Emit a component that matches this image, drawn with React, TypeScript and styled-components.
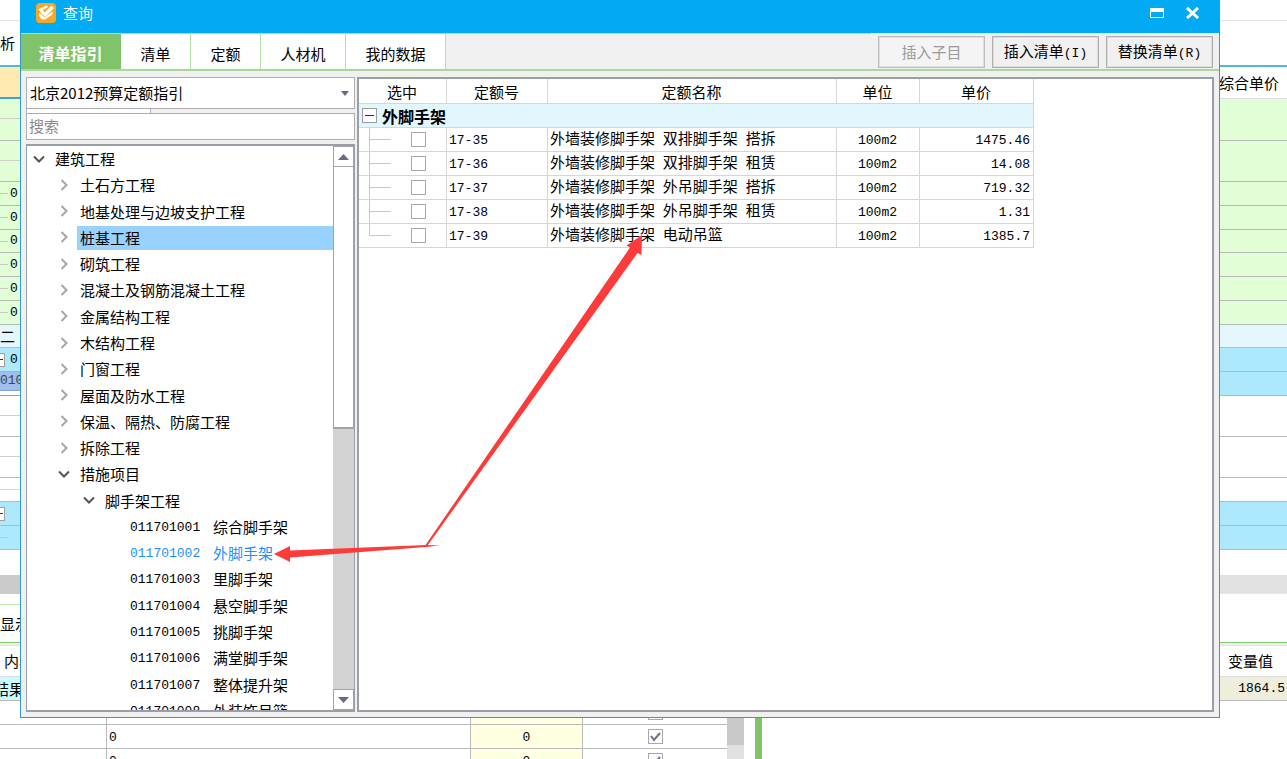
import React from "react";
import styled, { createGlobalStyle, css } from "styled-components";

const sans = '"Noto Sans CJK SC", "Liberation Sans", sans-serif';
const mono = '"Liberation Mono", "Noto Sans CJK SC", monospace';

const GlobalStyle = createGlobalStyle`
  * { box-sizing: border-box; }
  html, body { margin: 0; padding: 0; overflow: hidden; }
  body { font: 15px/24px ${sans}; color: #000; background: #fff; }
  button, input, select { font: inherit; color: inherit; }
`;

/* ---------- text helpers ---------- */

const Ascii = styled.span`
  font-family: ${mono};
  font-size: 13px;
  white-space: pre;
`;

const Mixed = ({ children }: { children: string }) => (
  <>
    {children.split(/([\x20-\x7e]+)/).map((part, i) =>
      i % 2 ? <Ascii key={i}>{part}</Ascii> : part
    )}
  </>
);

/* ---------- estimate sheet behind the dialog ---------- */

const Desktop = styled.main`
  position: relative;
  height: 100vh;
  overflow: hidden;
  background: #fff;
`;

const Sheet = styled.div`
  display: flex;
  justify-content: space-between;
`;

const Strip = styled.div<{ $wide?: boolean }>`
  width: ${(p) => (p.$wide ? "68px" : "36px")};
  overflow: hidden;
`;

type BandProps = { $h: number; $bg?: string; $line?: string; $thick?: boolean; $align?: string; $pad?: number; $dim?: boolean };

const Band = styled.div<BandProps>`
  display: flex;
  align-items: center;
  justify-content: ${(p) => p.$align ?? "flex-start"};
  height: ${(p) => p.$h}px;
  padding: 0 ${(p) => p.$pad ?? 0}px;
  background: ${(p) => p.$bg ?? "#fff"};
  border-bottom: ${(p) => (p.$thick ? 2 : 1)}px solid ${(p) => p.$line ?? "#b9b9b9"};
  color: ${(p) => (p.$dim ? "#444" : "inherit")};
  white-space: nowrap;
`;

const Twig = styled.span`
  width: 8px;
  margin-right: 2px;
  flex: none;
  border-top: 1px solid #c8c8c8;
`;

const MiniBox = styled.span`
  position: relative;
  flex: none;
  width: 5px;
  height: 14px;
  margin-right: 5px;
  border: 1px solid #a0a0a0;
  border-left: 0;
  background: #fff;
  &::before {
    content: "";
    position: absolute;
    left: 0;
    top: 5px;
    width: 3px;
    border-top: 1px solid #333;
  }
`;

type BandData = {
  h: number; bg?: string; line?: string; thick?: boolean;
  text?: string; align?: string; pad?: number; twig?: boolean; box?: boolean; dim?: boolean;
};

const green = "#e2fed6";
const cyan = "#aee8fc";
const blueLine = "#4db8e4";

const leftBands: BandData[] = [
  { h: 21, line: "#e2e2e2" },
  { h: 46, line: blueLine, thick: true, text: "析" },
  { h: 32, bg: "#ffebb2", line: "#3aa6d4", thick: true },
  { h: 20, bg: green, line: "#cfcfcf" },
  { h: 22, bg: green },
  { h: 20, bg: green, line: "#cfcfcf" },
  { h: 21, bg: green },
  ...[24, 24, 23, 24, 24, 24].map((h) => ({ h, bg: green, text: "0", twig: true })),
  { h: 23, bg: "#e4f7fd", text: "二" },
  { h: 24, bg: cyan, line: "#8fb7e0", text: "0", box: true },
  { h: 19, bg: "#a0bdec", line: "#7fa6dc", text: "010", dim: true },
  { h: 5, line: blueLine },
  { h: 20, line: "#cfcfcf" },
  { h: 21 },
  { h: 20, line: "#cfcfcf" },
  { h: 21 },
  { h: 12, line: "#d6d6d6" },
  { h: 12 },
  { h: 24, bg: cyan, box: true },
  { h: 24, bg: cyan, twig: true },
  { h: 25, line: "#fff" },
  { h: 19, bg: "#cbcbcb", line: "#cbcbcb" },
  { h: 11, line: "#b9ecab" },
  { h: 38, line: "#7ecb6c", text: "显示" },
  { h: 3, bg: "#eee", line: "#e2e2e2" },
  { h: 31, line: "#ddd", text: "内容", pad: 4 },
  { h: 24, bg: "#c9fbff", text: "结果", align: "flex-end", pad: 12 },
];

const rightBands: BandData[] = [
  { h: 21, line: "#e2e2e2" },
  { h: 46, line: blueLine, thick: true },
  { h: 32, line: "#ddd", text: "综合单价" },
  { h: 42, bg: green },
  { h: 41, bg: green },
  ...[24, 24, 23, 24, 24, 24].map((h) => ({ h, bg: green })),
  { h: 23, bg: "#e4f7fd" },
  { h: 24, bg: cyan },
  { h: 24, bg: cyan },
  { h: 41 },
  { h: 41 },
  { h: 24 },
  { h: 24, bg: cyan },
  { h: 24, bg: cyan },
  { h: 25, line: "#fff" },
  { h: 19, bg: "#e1e1e1", line: "#e8e8e8" },
  { h: 49, line: "#7ecb6c" },
  { h: 3, bg: "#eee", line: "#e2e2e2" },
  { h: 31, line: "#ddd", text: "变量值", pad: 9 },
  { h: 24, bg: "#efeddc", text: "1864.5", align: "flex-end", pad: 2 },
];

const Bands = ({ rows }: { rows: BandData[] }) => (
  <>
    {rows.map((r, i) => (
      <Band key={i} $h={r.h} $bg={r.bg} $line={r.line} $thick={r.thick} $align={r.align} $pad={r.pad} $dim={r.dim}>
        {r.twig && <Twig />}
        {r.box && <MiniBox />}
        {r.text && <Mixed>{r.text}</Mixed>}
      </Band>
    ))}
  </>
);

const Footer = styled.div`
  display: flex;
  height: 60px;
  overflow: hidden;
`;

const VarTable = styled.table`
  width: 727px;
  table-layout: fixed;
  border-collapse: separate;
  border-spacing: 0;
  td {
    height: 24px;
    padding: 0 2px;
    line-height: 20px;
    border-bottom: 1px solid #b9b9b9;
    border-right: 1px solid #b9b9b9;
  }
  td:nth-child(3) { background: #ffffe2; text-align: center; }
  td:nth-child(4) { border-right: 0; text-align: center; }
`;

const Track = styled.div`
  width: 17px;
  background: #e1e1e1;
`;

const Thumb = styled.div`
  height: 44px;
  background: #c9c9c9;
`;

const Splitter = styled.div`
  width: 7px;
  margin-left: 11px;
  background: #80c56b;
`;

const tick =
  "url(\"data:image/svg+xml,%3Csvg xmlns='http://www.w3.org/2000/svg' viewBox='0 0 13 13'%3E%3Cpath d='M2 6l3 4 6-7' fill='none' stroke='%236f6f88' stroke-width='2'/%3E%3C/svg%3E\")";

const Check = styled.input`
  appearance: none;
  display: block;
  flex: none;
  width: 15px;
  height: 15px;
  margin: 0 auto;
  border: 1px solid #a8a8a8;
  background: #fff;
  &:checked { background: #fff ${tick} center / 13px 13px no-repeat; }
`;

/* ---------- dialog frame ---------- */

const Dialog = styled.section`
  position: absolute;
  inset: 0 67px 41px 20px;
  display: flex;
  flex-direction: column;
  border: 1px solid #2f9dcb;
  border-top: 0;
  background: #f0f0f0;
`;

const TitleBar = styled.header`
  display: flex;
  align-items: center;
  flex: none;
  height: 33px;
  margin: 0 -1px;
  padding: 0 20px 7px 16px;
  background: #02a9f3;
  color: #fff;
`;

const Title = styled.h1`
  flex: 1;
  margin: 0 0 0 7px;
  font-size: 15px;
  font-weight: 400;
  line-height: 24px;
`;

const WindowButton = styled.button`
  display: flex;
  padding: 0;
  border: 0;
  background: none;
  & + & { margin-left: 21px; }
`;

const Toolbar = styled.div`
  display: flex;
  align-items: center;
  flex: none;
  height: 38px;
  padding-right: 6px;
  border-bottom: 2px solid #a9d99a;
`;

const Tabs = styled.nav`
  display: flex;
  flex: 1;
  align-self: stretch;
  border-top: 1px solid #b4e2a2;
`;

const Tab = styled.button<{ $w: number; $active?: boolean }>`
  width: ${(p) => p.$w}px;
  padding: 4px 0 0;
  border: 0;
  border-right: 1px solid #b4e2a2;
  background: #fff;
  ${(p) =>
    p.$active &&
    css`
      padding-top: 2px;
      background: #80c36b;
      border-color: #80c36b;
      color: #fff;
      font-size: 16px;
      font-weight: 700;
    `}
`;

const Action = styled.button`
  width: 107px;
  height: 32px;
  margin: 2px 0 0 7px;
  padding: 0;
  border: 1px solid #adadad;
  outline: 1px solid #dedede;
  outline-offset: -2px;
  background: #f0f0f0;
  line-height: 24px;
  &:disabled { color: #9b9b9b; background: #f4f4f4; border-color: #bdbdbd; }
`;

const Body = styled.div`
  display: flex;
  flex: 1;
  gap: 2px;
  min-height: 0;
  padding: 6px 5px 5px;
`;

/* ---------- guide tree ---------- */

const Side = styled.aside`
  display: flex;
  flex-direction: column;
  flex: none;
  width: 329px;
`;

const SelectWrap = styled.div`
  position: relative;
  svg { position: absolute; right: 6px; top: 14px; pointer-events: none; }
`;

const GuideSelect = styled.select`
  appearance: none;
  display: block;
  width: 100%;
  height: 32px;
  padding: 0 3px;
  border: 1px solid #adadad;
  border-radius: 0;
  background: #fff;
`;

const Sliver = styled.div`
  width: 125px;
  height: 4px;
  border: solid #b4b4b4;
  border-width: 0 1px;
  background: #fff;
`;

const Search = styled.input`
  height: 27px;
  padding: 0 2px 2px;
  border: 1px solid #adadad;
  border-radius: 0;
  background: #fff;
  &::placeholder { color: #8a8a8a; opacity: 1; }
`;

const TreeBox = styled.div`
  display: flex;
  flex: 1;
  min-height: 0;
  margin-top: 4px;
  border: 2px solid #9a9ea6;
  border-width: 2px 1px;
  background: #fff;
`;

const TreeView = styled.div`
  flex: 1;
  overflow: hidden;
`;

const TreeList = styled.ul`
  display: grid;
  grid-auto-rows: 1fr;
  height: 578px;
  margin: 0;
  padding: 0;
  list-style: none;
`;

const TreeItem = styled.li<{ $depth: number }>`
  display: flex;
  align-items: center;
  padding-left: ${(p) => p.$depth * 25}px;
  svg { flex: none; margin: 0 7px 1px 6px; }
`;

const TreeLabel = styled.span<{ $selected?: boolean; $current?: boolean; $leaf?: boolean }>`
  display: flex;
  flex: 1;
  height: 24px;
  margin-left: ${(p) => (p.$leaf ? 25 : 0)}px;
  padding-left: 3px;
  background: ${(p) => (p.$selected ? "#99d1ff" : "none")};
  color: ${(p) => (p.$current ? "#1e90ff" : "inherit")};
  white-space: nowrap;
`;

const Code = styled(Ascii)`
  width: 83px;
  line-height: 26px;
`;

const ScrollBar = styled.div`
  display: flex;
  flex-direction: column;
  flex: none;
  width: 21px;
  background: #d3d3d3;
`;

const ScrollButton = styled.button`
  display: flex;
  align-items: center;
  justify-content: center;
  height: 21px;
  padding: 0;
  border: 1px solid #a4a4a4;
  background: #fff;
`;

const ScrollThumb = styled.div`
  height: 262px;
  margin-bottom: auto;
  border: 1px solid #a4a4a4;
  border-top: 0;
  border-bottom-width: 2px;
  background: #fff;
`;

type Node = { depth: number; label: string; open?: boolean; code?: string; selected?: boolean; current?: boolean };

const chapters = [
  "土石方工程", "地基处理与边坡支护工程", "桩基工程", "砌筑工程", "混凝土及钢筋混凝土工程",
  "金属结构工程", "木结构工程", "门窗工程", "屋面及防水工程", "保温、隔热、防腐工程", "拆除工程",
];

const scaffolds = [
  "综合脚手架", "外脚手架", "里脚手架", "悬空脚手架", "挑脚手架", "满堂脚手架", "整体提升架", "外装饰吊篮",
];

const nodes: Node[] = [
  { depth: 0, label: "建筑工程", open: true },
  ...chapters.map((label) => ({ depth: 1, label, selected: label === "桩基工程" })),
  { depth: 1, label: "措施项目", open: true },
  { depth: 2, label: "脚手架工程", open: true },
  ...scaffolds.map((label, i) => ({
    depth: 3,
    label,
    code: `01170100${i + 1}`,
    current: label === "外脚手架",
  })),
];

const Chevron = ({ open }: { open?: boolean }) => (
  <svg width="12" height="12" viewBox="0 0 12 12" fill="none" strokeWidth="2">
    {open ? <path d="M1 3.5l5 5 5-5" stroke="#555" /> : <path d="M3.5 1l5 5-5 5" stroke="#a6a6a6" />}
  </svg>
);

const Triangle = ({ up }: { up?: boolean }) => (
  <svg width="11" height="6" viewBox="0 0 11 6">
    <path d={up ? "M0 6L5.5 0 11 6z" : "M0 0h11L5.5 6z"} fill="#6a6a80" />
  </svg>
);

/* ---------- quota table ---------- */

const Pane = styled.div`
  flex: 1;
  min-width: 0;
  border: 2px solid #9a9ea6;
  background: #fff;
`;

const Quotas = styled.table`
  width: 675px;
  table-layout: fixed;
  border-collapse: separate;
  border-spacing: 0;
  th, td {
    height: 24px;
    padding: 0 3px 0 2px;
    line-height: 20px;
    border: solid #d6d6d6;
    border-width: 0 1px 1px 0;
    text-align: left;
    white-space: nowrap;
  }
  thead th { height: 25px; padding-top: 2px; font-weight: 400; text-align: center; }
  tbody td:first-child { padding: 0; }
  td:nth-child(4) { text-align: center; }
  td:nth-child(5) { text-align: right; }
`;

const GroupCell = styled.th`
  && { padding: 0; background: #e2f6fe; }
`;

const GroupInner = styled.div`
  display: flex;
  align-items: center;
  gap: 5px;
  height: 23px;
  padding-left: 3px;
  font-size: 16px;
  font-weight: 700;
`;

const Expander = styled.button`
  display: flex;
  width: 15px;
  height: 15px;
  padding: 0;
  border: 1px solid #9c9c9c;
  background: #fff;
`;

const Pick = styled.div`
  display: flex;
  align-items: center;
  height: 23px;
  svg { flex: none; margin-right: 19px; }
  ${Check} { margin: 0; }
`;

const quotas = [
  ["17-35", "外墙装修脚手架 双排脚手架 搭拆", "1475.46"],
  ["17-36", "外墙装修脚手架 双排脚手架 租赁", "14.08"],
  ["17-37", "外墙装修脚手架 外吊脚手架 搭拆", "719.32"],
  ["17-38", "外墙装修脚手架 外吊脚手架 租赁", "1.31"],
  ["17-39", "外墙装修脚手架 电动吊篮", "1385.7"],
];

const Arrows = styled.svg`
  position: absolute;
  left: 0;
  top: 0;
  pointer-events: none;
`;

export default function App() {
  return (
    <Desktop>
      <GlobalStyle />
      <Sheet>
        <Strip><Bands rows={leftBands} /></Strip>
        <Strip $wide><Bands rows={rightBands} /></Strip>
      </Sheet>
      <Footer>
        <VarTable>
          <colgroup>
            <col style={{ width: 107 }} />
            <col style={{ width: 364 }} />
            <col style={{ width: 112 }} />
            <col />
          </colgroup>
          <tbody>
            {[0, 1, 2].map((i) => (
              <tr key={i}>
                <td />
                <td><Ascii>0</Ascii></td>
                <td><Ascii>0</Ascii></td>
                <td><Check type="checkbox" defaultChecked aria-label={`变量 ${i + 1}`} /></td>
              </tr>
            ))}
          </tbody>
        </VarTable>
        <Track><Thumb /></Track>
        <Splitter />
      </Footer>

      <Dialog role="dialog" aria-label="查询">
        <TitleBar>
          <svg width="20" height="20" viewBox="0 0 20 20" fill="none">
            <rect width="20" height="20" rx="4" fill="#f9a825" />
            <path d="M2 6.500L10.500 2.500l1.500 1.500-5 3 1.500 2.500L15.500 2.500 18 5l-8.500 8.500-4-2.500L4 8z" fill="#fff" />
            <path d="M3 9.500c-.5 4.500 2 7.500 6 7l7.500-5v-3L9 14l-3.500-2z" fill="#fff" />
          </svg>
          <Title>查询</Title>
          <WindowButton aria-label="最大化">
            <svg width="14" height="10" viewBox="0 0 14 10" fill="none">
              <path d="M.5.500h13v9H.5z" stroke="#fff" />
              <path d="M0 0h14v4H0z" fill="#fff" />
            </svg>
          </WindowButton>
          <WindowButton aria-label="关闭">
            <svg width="15" height="12" viewBox="0 0 15 12" fill="none">
              <path d="M2 1l11 10M13 1L2 11" stroke="#fff" strokeWidth="3" />
            </svg>
          </WindowButton>
        </TitleBar>
        <Toolbar>
          <Tabs>
            <Tab $w={100} $active>清单指引</Tab>
            <Tab $w={70}>清单</Tab>
            <Tab $w={70}>定额</Tab>
            <Tab $w={85}>人材机</Tab>
            <Tab $w={100}>我的数据</Tab>
          </Tabs>
          <Action disabled>插入子目</Action>
          <Action><Mixed>插入清单(I)</Mixed></Action>
          <Action><Mixed>替换清单(R)</Mixed></Action>
        </Toolbar>
        <Body>
          <Side>
            <SelectWrap>
              <GuideSelect aria-label="定额指引">
                <option>北京2012预算定额指引</option>
              </GuideSelect>
              <svg width="8" height="5" viewBox="0 0 8 5"><path d="M0 0h8L4 5z" fill="#6a6a80" /></svg>
            </SelectWrap>
            <Sliver />
            <Search placeholder="搜索" aria-label="搜索" />
            <TreeBox>
              <TreeView>
                <TreeList>
                  {nodes.map((n) => (
                    <TreeItem key={n.label} $depth={n.depth}>
                      {!n.code && <Chevron open={n.open} />}
                      <TreeLabel $selected={n.selected} $current={n.current} $leaf={!!n.code}>
                        {n.code && <Code>{n.code}</Code>}
                        {n.label}
                      </TreeLabel>
                    </TreeItem>
                  ))}
                </TreeList>
              </TreeView>
              <ScrollBar>
                <ScrollButton aria-label="向上滚动"><Triangle up /></ScrollButton>
                <ScrollThumb />
                <ScrollButton aria-label="向下滚动"><Triangle /></ScrollButton>
              </ScrollBar>
            </TreeBox>
          </Side>
          <Pane>
            <Quotas>
              <colgroup>
                <col style={{ width: 88 }} />
                <col style={{ width: 101 }} />
                <col style={{ width: 289 }} />
                <col style={{ width: 83 }} />
                <col style={{ width: 114 }} />
              </colgroup>
              <thead>
                <tr>
                  <th>选中</th>
                  <th>定额号</th>
                  <th>定额名称</th>
                  <th>单位</th>
                  <th>单价</th>
                </tr>
              </thead>
              <tbody>
                <tr>
                  <GroupCell colSpan={5}>
                    <GroupInner>
                      <Expander aria-label="折叠">
                        <svg width="13" height="13" viewBox="0 0 13 13"><path d="M2 6.500h9" stroke="#333" /></svg>
                      </Expander>
                      外脚手架
                    </GroupInner>
                  </GroupCell>
                </tr>
                {quotas.map(([code, name, price], i) => (
                  <tr key={code}>
                    <td>
                      <Pick>
                        <svg width="33" height="23" viewBox="0 0 33 23">
                          <path
                            d={i === quotas.length - 1 ? "M10.500 0v11.500H32" : "M10.500 0v23M10.500 11.500H32"}
                            stroke="#c8c8c8"
                            fill="none"
                          />
                        </svg>
                        <Check type="checkbox" aria-label={code} />
                      </Pick>
                    </td>
                    <td><Ascii>{code}</Ascii></td>
                    <td><Mixed>{name}</Mixed></td>
                    <td><Ascii>100m2</Ascii></td>
                    <td><Ascii>{price}</Ascii></td>
                  </tr>
                ))}
              </tbody>
            </Quotas>
          </Pane>
        </Body>
      </Dialog>

      <Arrows width="700" height="600" viewBox="0 0 700 600" fill="#fd3b3b" aria-hidden="true">
        <path d="M274 554l16-8v4.500L426 545l14 .5-14 1.500-136 10.500v4.500z" />
        <path d="M642 235l-15.500 10.500 3.500 2L424.500 546.500l2 .5L637.500 253l4 2z" />
      </Arrows>
    </Desktop>
  );
}
